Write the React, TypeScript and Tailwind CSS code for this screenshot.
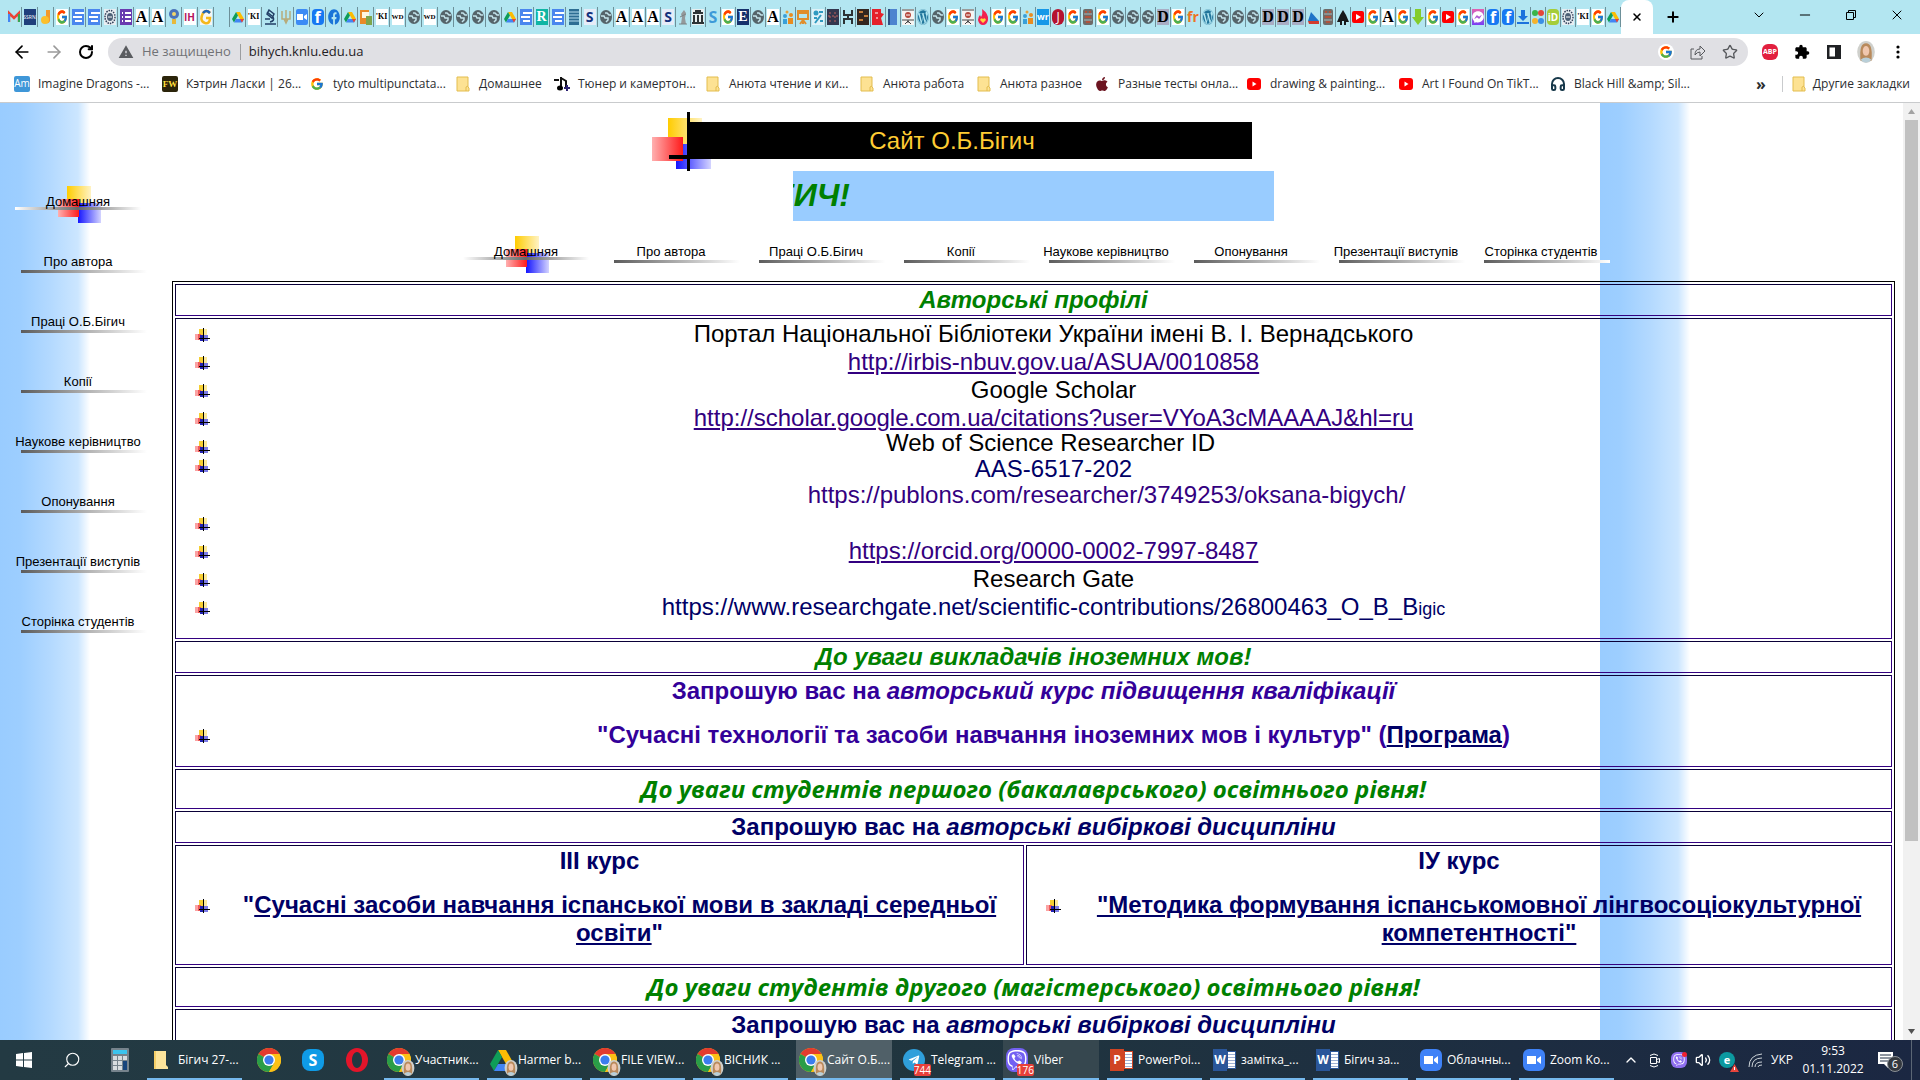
import { clsx } from "clsx";
import {
  ArrowLeft,
  ArrowRight,
  ChevronDown,
  ChevronUp,
  Headphones,
  Minus,
  Plus,
  RotateCw,
  Search,
  Star,
  Volume2,
  X,
} from "lucide-react";
import type { ReactNode } from "react";
import { FaApple, FaFacebook, FaFacebookMessenger, FaTelegramPlane, FaViber, FaWordpress } from "react-icons/fa";
import { FcGoogle } from "react-icons/fc";
import { MdExtension, MdWarning } from "react-icons/md";

/* ---------- small drawings ---------- */

const DriveIcon = ({ className }: { className?: string }) => (
  <svg viewBox="0 0 24 22" className={className}>
    <path d="M8 1h8l8 14h-8z" fill="#fbbc04" />
    <path d="M8 1l4 7L4 22 0 15z" fill="#0f9d58" />
    <path d="M4 22l4-7h16l-4 7z" fill="#4285f4" />
    <path d="M16 15h8l-4 7z" fill="#ea4335" />
  </svg>
);

const ChromeIcon = ({ className }: { className?: string }) => (
  <svg viewBox="0 0 24 24" className={className}>
    <circle cx="12" cy="12" r="12" fill="#fbc116" />
    <path d="M12 12L1.6 6A12 12 0 0 1 22.4 6z" fill="#e33b2e" />
    <path d="M1.6 6A12 12 0 0 0 12 24l5.2-9L12 12z" fill="#2a9d48" />
    <path d="M12 6h10.4A12 12 0 0 1 12 24l5.2-9z" fill="#fbc116" />
    <circle cx="12" cy="12" r="6" fill="#fff" />
    <circle cx="12" cy="12" r="4.6" fill="#3b7ded" />
  </svg>
);

const FolderIcon = ({ className }: { className?: string }) => (
  <svg viewBox="0 0 14 16" className={className}>
    <path d="M1 1h11v10l1 1v3H1z" fill="#fde293" stroke="#e3bd4f" />
    <path d="M10 15v-4l2-1" fill="none" stroke="#e3bd4f" />
  </svg>
);

const YoutubeIcon = () => (
  <svg viewBox="0 0 16 16" className="h-4 w-4 shrink-0">
    <rect x="1" y="2" width="14" height="12" rx="3" fill="#f00" />
    <path d="M6.500 5.500v5l4-2.500z" fill="#fff" />
  </svg>
);

const Face = ({ className }: { className?: string }) => (
  <svg viewBox="0 0 16 20" className={className}>
    <ellipse cx="8" cy="10" rx="8" ry="10" fill="#cfd0cc" />
    <path d="M3 18C2 6 4 2 8 2s6 4 5 16z" fill="#b98a5c" />
    <ellipse cx="8" cy="9" rx="3" ry="4.500" fill="#f0c7ae" />
    <path d="M3 17q5-4 10 0-5 5-10 0z" fill="#b9cfd8" />
  </svg>
);

const Bullet = ({ className }: { className?: string }) => (
  <svg viewBox="0 0 15 14" className={clsx("ml-[18px] h-[14px] w-[15px]", className)}>
    <rect x="4" y="1" width="4" height="6" fill="#f6cf33" />
    <rect x="8" y="1" width="4" height="6" fill="#fdeb9c" />
    <rect x="0" y="6" width="3" height="6" fill="#fba3a3" />
    <rect x="3" y="6" width="3" height="6" fill="#ee5a5a" />
    <rect x="5" y="7" width="4" height="6" fill="#2222b4" />
    <rect x="9" y="7" width="4" height="6" fill="#7c7ce8" />
    <rect x="8" y="0" width="1" height="14" fill="#000" />
    <rect x="4" y="10" width="11" height="1" fill="#000" />
  </svg>
);

const Letter = ({ text, className }: { text: string; className: string }) => (
  <span className={clsx("flex h-4 w-3 items-center justify-center leading-4", className)}>{text}</span>
);

/* ---------- tab strip ---------- */

const serif = "font-['Liberation_Serif',serif] font-bold";

const emblem = (
  <svg viewBox="0 0 12 16" className="h-4 w-3">
    <rect width="12" height="16" fill="#e8eef2" />
    <ellipse cx="6" cy="8" rx="5" ry="6.500" fill="none" stroke="#34425c" strokeDasharray="1.500 1" strokeWidth="1.500" />
    <ellipse cx="6" cy="8" rx="3" ry="4" fill="#4d6077" />
    <path d="M4 8h4" stroke="#fff" />
  </svg>
);

const totem = (
  <svg viewBox="0 0 12 16" className="h-4 w-3">
    <rect x="1" width="10" height="16" rx="2" fill="#6f6a68" />
    <path d="M2 5h8M2 11h8" stroke="#a9b6b8" />
    <path d="M3 3h2M7 3h2M3 8h6M4 13h4" stroke="#b1523c" strokeWidth="2" />
  </svg>
);

const people = (
  <svg viewBox="0 0 12 16" className="h-4 w-3">
    <circle cx="5" cy="3" r="1.500" fill="#e9a13b" />
    <circle cx="3" cy="7" r="2" fill="#3aa0d8" />
    <circle cx="9" cy="6" r="2" fill="#e98c1f" />
    <path d="M1 15v-5h4v5z" fill="#3aa0d8" />
    <path d="M6 15V9h5v6z" fill="#e98c1f" />
  </svg>
);

const board = (
  <svg viewBox="0 0 12 16" className="h-4 w-3">
    <rect width="12" height="16" fill="#f6f4f2" />
    <path d="M0 1h12M0 11h12M6 11v3M3 15l3-3 3 3" stroke="#444" fill="none" />
    <circle cx="6" cy="6" r="3" fill="#b5493d" />
    <path d="M4 6h4" stroke="#fff" />
  </svg>
);

const favicons: Record<string, ReactNode> = {
  gmail: (
    <svg viewBox="0 0 12 16" className="h-4 w-3">
      <path d="M1 13V4l5 5 5-5v9" fill="none" stroke="#ea4335" strokeWidth="2.500" />
      <path d="M1 13V5" stroke="#4285f4" strokeWidth="2" />
      <path d="M11 13V5" stroke="#34a853" strokeWidth="2" />
    </svg>
  ),
  ssrn: <Letter text="SSRN" className="bg-[#1f3f7c] text-[5px] text-white" />,
  orange: (
    <svg viewBox="0 0 12 16" className="h-4 w-3">
      <path d="M6 1h4v11a3 3 0 0 1-4 2z" fill="#f29a2e" />
      <circle cx="5" cy="11" r="4" fill="#fbc02d" />
    </svg>
  ),
  g: (
    <span className="flex h-4 w-3 items-center justify-center bg-white">
      <FcGoogle className="h-4 w-3" preserveAspectRatio="none" />
    </span>
  ),
  docs: (
    <svg viewBox="0 0 12 16" className="h-4 w-3">
      <rect width="12" height="16" fill="#4a86ee" />
      <path d="M3 4h9M1 8h9M3 12h7" stroke="#fff" strokeWidth="2" />
    </svg>
  ),
  stripes: (
    <svg viewBox="0 0 12 16" className="h-4 w-3">
      <rect x="1" width="10" height="16" fill="#2d6e93" />
      <path d="M1 3h10M1 6h10M1 9h10M1 12h10" stroke="#b8dff0" />
    </svg>
  ),
  emblem,
  forms: (
    <svg viewBox="0 0 12 16" className="h-4 w-3">
      <rect width="12" height="16" fill="#6a3ab0" />
      <path d="M2 4h1M5 4h6M2 8h1M5 8h6M2 12h1M5 12h6" stroke="#fff" strokeWidth="2" />
    </svg>
  ),
  a: <Letter text="A" className={clsx(serif, "bg-white text-base text-black")} />,
  bulb: (
    <svg viewBox="0 0 12 16" className="h-4 w-3">
      <circle cx="6" cy="5" r="5" fill="#4c74b8" />
      <circle cx="6" cy="5" r="2" fill="#f3d66b" />
      <path d="M4 10h4v5H4z" fill="#e7b93c" />
    </svg>
  ),
  ih: <Letter text="ІН" className="bg-white text-[10px] font-bold text-[#b4175f]" />,
  gy: (
    <svg viewBox="0 0 12 16" className="h-4 w-3">
      <rect width="12" height="16" fill="#f4f6f8" />
      <path d="M10 4Q6 0 3 4-1 12 5 14q5 1 5-5H6" fill="none" stroke="#f4b81c" strokeWidth="2.500" />
      <path d="M10 4Q6 0 3 4" fill="none" stroke="#1e63ba" strokeWidth="2.500" />
    </svg>
  ),
  blank: null,
  drive: <DriveIcon className="h-[14px] w-3" />,
  ki: <Letter text="'KI" className={clsx(serif, "bg-white text-[8px] text-black")} />,
  scope: (
    <svg viewBox="0 0 12 16" className="h-4 w-3" fill="none" stroke="#233f66" strokeWidth="1.500">
      <path d="M3 3l5 4M5 1l5 4-2 4-5-4zM9 8q2 4-3 5M1 10h5M1 15h11" />
    </svg>
  ),
  trident: (
    <svg viewBox="0 0 12 16" className="h-4 w-3" fill="none" stroke="#b7ac7c" strokeWidth="1.500">
      <path d="M2 2v8h8V2M6 1v13M4 10l2 4 2-4" />
    </svg>
  ),
  zoom: (
    <svg viewBox="0 0 12 16" className="h-4 w-3">
      <rect width="12" height="16" rx="2" fill="#3c8bf5" />
      <path d="M1 5h6v6H1zM8 7l3-2v6L8 9z" fill="#fff" />
    </svg>
  ),
  fb: <Letter text="f" className="rounded-sm bg-[#1778f2] text-base font-bold text-white" />,
  fbr: <FaFacebook className="h-4 w-3 text-[#1a74d8]" preserveAspectRatio="none" />,
  clip: (
    <svg viewBox="0 0 12 16" className="h-4 w-3">
      <rect y="1" width="9" height="14" fill="#e98a28" />
      <rect x="2" y="3" width="7" height="6" fill="#fff6e0" />
      <rect x="6" y="7" width="6" height="9" fill="#7ea64c" />
    </svg>
  ),
  wd: <Letter text="WD" className={clsx(serif, "bg-white text-[7px] text-black")} />,
  globe: (
    <svg viewBox="0 0 12 16" className="h-4 w-3">
      <ellipse cx="6" cy="8" rx="6" ry="7" fill="#55646a" />
      <path d="M1 7h3l1 2h3v2l-2 2M5 4h2l2 2h2" fill="none" stroke="#c4e4ec" strokeWidth="1.500" />
    </svg>
  ),
  r: <Letter text="R" className={clsx(serif, "bg-[#10b5a4] text-sm text-white")} />,
  s: <Letter text="S" className="bg-[#e6ecf8] text-sm font-bold text-[#12307c]" />,
  statue: (
    <svg viewBox="0 0 12 16" className="h-4 w-3">
      <path d="M4 15l1-7-1-3 3-4 2 3-1 5 1 6z" fill="#94999b" />
      <path d="M2 15h8M3 8l6-3" stroke="#7b8284" />
    </svg>
  ),
  museum: (
    <svg viewBox="0 0 12 16" className="h-4 w-3">
      <rect width="12" height="16" fill="#e9efef" />
      <path d="M1 4h10M2 6v7M6 6v7M10 6v7M0 14h12M3 2h6" stroke="#2d3335" strokeWidth="2" />
    </svg>
  ),
  sb: <Letter text="S" className="text-base font-bold text-[#3d9ad8]" />,
  e: <Letter text="E" className={clsx(serif, "bg-[#16306b] text-sm text-white")} />,
  easel: (
    <svg viewBox="0 0 12 16" className="h-4 w-3" fill="none" stroke="#e08d2c" strokeWidth="2">
      <path d="M0 2h12M1 4h10v6H1zM6 10v5M3 15l3-4 3 4" />
    </svg>
  ),
  teal: (
    <svg viewBox="0 0 12 16" className="h-4 w-3">
      <rect width="12" height="16" fill="#dff2f8" />
      <circle cx="4" cy="4" r="2.500" fill="#2f9ac0" />
      <path d="M3 14l6-8M7 3h4M2 9h3M8 12h3" stroke="#2f9ac0" strokeWidth="2" />
    </svg>
  ),
  night: (
    <svg viewBox="0 0 12 16" className="h-4 w-3">
      <rect width="12" height="16" fill="#33364e" />
      <path d="M1 7h10M3 3v10M8 3v10" stroke="#c0635e" strokeDasharray="2 2" />
    </svg>
  ),
  knot: (
    <svg viewBox="0 0 12 16" className="h-4 w-3" fill="none" stroke="#2b3134" strokeWidth="2">
      <path d="M2 1v5h8V1M2 15v-5h8v5M6 6v4" />
    </svg>
  ),
  brown: (
    <svg viewBox="0 0 12 16" className="h-4 w-3">
      <rect width="12" height="16" fill="#33251f" />
      <path d="M2 3h4M7 7h4M2 11h4" stroke="#c47b3a" strokeWidth="2" />
    </svg>
  ),
  red: (
    <svg viewBox="0 0 12 16" className="h-4 w-3">
      <path d="M0 0h9v4l3 1-3 4 2 7H0z" fill="#e5202a" />
      <path d="M3 4h3M4 9h2" stroke="#fff" />
    </svg>
  ),
  book: (
    <svg viewBox="0 0 12 16" className="h-4 w-3">
      <rect x="2" width="8" height="16" fill="#4d83cf" />
      <path d="M2 0v16" stroke="#2d4f84" strokeWidth="2" />
    </svg>
  ),
  board,
  wp: <FaWordpress className="h-4 w-3 text-[#21759b]" preserveAspectRatio="none" />,
  flame: (
    <svg viewBox="0 0 12 16" className="h-4 w-3">
      <path d="M5 0q7 5 6 11-1 5-5 5T1 11q0-3 2-5l1 2q2-3 1-8z" fill="#f2204f" />
      <path d="M6 14l-3-3q1-3 3-1 2-2 3 1z" fill="#ffd43b" />
    </svg>
  ),
  people,
  wr: <Letter text="wr" className="bg-[#1598e8] text-[9px] font-bold text-white" />,
  j: <Letter text="J" className="rounded-md bg-[#b5122f] text-xs text-white" />,
  totem,
  d: <Letter text="D" className={clsx(serif, "bg-[#a9adc4] text-base text-black")} />,
  fr: <Letter text="fr" className="text-sm font-bold text-[#ec7424]" />,
  tri: (
    <svg viewBox="0 0 12 16" className="h-4 w-3">
      <path d="M1 12l3-9 8 9z" fill="#1f74c8" />
      <path d="M1 12h11v3H2z" fill="#d23b2e" />
    </svg>
  ),
  tree: (
    <svg viewBox="0 0 12 16" className="h-4 w-3">
      <path d="M6 1l3 5 3 7H9v3H7v-4H5v4H3v-3H0l3-7z" fill="#16191b" />
    </svg>
  ),
  yt: (
    <svg viewBox="0 0 12 16" className="h-4 w-3">
      <rect y="2" width="12" height="12" rx="2" fill="#f00" />
      <path d="M4 5v6l5-3z" fill="#fff" />
    </svg>
  ),
  green: (
    <svg viewBox="0 0 12 16" className="h-4 w-3">
      <path d="M3 0h6v8h3l-6 8-6-8h3z" fill="#84cc2a" />
    </svg>
  ),
  msg: (
    <span className="flex h-4 w-3 items-center justify-center bg-linear-to-b from-[#e45fb0] to-[#7a3cf4]">
      <FaFacebookMessenger className="h-3 w-3 text-white" />
    </span>
  ),
  down: (
    <svg viewBox="0 0 12 16" className="h-4 w-3">
      <path d="M4 1h4v6h3l-5 5-5-5h3zM0 13h12v2H0z" fill="#1c72dc" />
    </svg>
  ),
  dots: (
    <svg viewBox="0 0 12 16" className="h-4 w-3">
      <circle cx="3" cy="4" r="3" fill="#3bb54a" />
      <circle cx="9" cy="4" r="3" fill="#e5473a" />
      <circle cx="3" cy="12" r="3" fill="#f5b32c" />
      <circle cx="9" cy="12" r="3" fill="#3b8fe5" />
    </svg>
  ),
  id: <Letter text="iD" className="rounded-sm bg-[#a5cd39] text-[10px] font-bold text-white" />,
};

const wideTabs =
  "gmail ssrn orange g docs docs emblem forms a a bulb ih gy blank drive ki scope trident zoom fb fbr drive clip ki wd globe wd globe globe globe globe drive docs r docs stripes s globe a a".split(" ");
const narrowTabs =
  "a s statue museum sb g e globe a people easel teal night knot brown red book board wp globe g board flame g g people wr j g totem g globe globe globe d g fr wp globe globe globe d d d tri totem tree yt g a g green g yt g msg fb fb down dots id emblem ki g drive".split(" ");

function TabStrip() {
  return (
    <div className="flex h-[34px] shrink-0 items-stretch bg-[#b3e6f1] pl-[6px]">
      {wideTabs.map((name, i) => (
        <button key={i} aria-label={name} className="flex w-4 shrink-0 items-center justify-center">
          <span className="flex h-5 w-4 items-center justify-center border-r border-[#6d9099]">{favicons[name]}</span>
        </button>
      ))}
      {narrowTabs.map((name, i) => (
        <button key={i} aria-label={name} className="flex w-[15px] shrink-0 items-center justify-center">
          <span className="flex h-5 w-[15px] items-center justify-center border-r border-[#6d9099]">{favicons[name]}</span>
        </button>
      ))}
      <button aria-label="Закрыть вкладку" className="flex w-8 shrink-0 items-center justify-center rounded-t-lg bg-white">
        <X className="h-3 w-3" strokeWidth={3} />
      </button>
      <button aria-label="Новая вкладка" className="ml-[10px] flex w-5 items-center justify-center">
        <Plus className="h-4 w-4" strokeWidth={3} />
      </button>
      <div className="ml-auto flex items-center pb-1">
        <button aria-label="Поиск вкладок" className="flex w-[46px] justify-center">
          <ChevronDown className="h-4 w-4" strokeWidth={1.5} />
        </button>
        <button aria-label="Свернуть" className="flex w-[46px] justify-center">
          <Minus className="h-4 w-4" strokeWidth={1.5} />
        </button>
        <button aria-label="Окно" className="flex w-[46px] justify-center">
          <svg viewBox="0 0 12 12" className="h-3 w-3" fill="none" stroke="#000">
            <path d="M1.500 3.500h7v7h-7zM3.500 3.500v-2h7v7h-2" />
          </svg>
        </button>
        <button aria-label="Закрыть" className="flex w-[46px] justify-center">
          <X className="h-4 w-4" strokeWidth={1.5} />
        </button>
      </div>
    </div>
  );
}

/* ---------- toolbar and bookmarks ---------- */

function Toolbar() {
  return (
    <div className="flex h-9 shrink-0 items-center pr-[14px] pl-3">
      <button aria-label="Назад" className="mr-3 w-5">
        <ArrowLeft className="h-5 w-5" strokeWidth={2} />
      </button>
      <button aria-label="Вперёд" className="mr-3 w-5 text-[#9a9a9a]">
        <ArrowRight className="h-5 w-5" strokeWidth={2} />
      </button>
      <button aria-label="Обновить" className="mr-3 flex w-5 justify-center">
        <RotateCw className="h-4 w-4" strokeWidth={3} />
      </button>
      <div className="flex h-7 flex-1 items-center rounded-full bg-[#e0e0e4] pr-[10px] pl-[10px] text-[13px]">
        <MdWarning className="h-4 w-4 text-[#5a5c60]" />
        <label htmlFor="address" className="ml-2 text-[#707276]">
          Не защищено
        </label>
        <span className="mr-2 ml-[9px] h-4 w-px bg-[#9b9da0]" />
        <input id="address" defaultValue="bihych.knlu.edu.ua" className="min-w-0 flex-1 bg-transparent text-[#1f2124] outline-none" />
        <span className="flex h-4 w-4 items-center justify-center rounded-full bg-white">
          <FcGoogle className="h-[14px] w-[14px]" />
        </span>
        <button aria-label="Поделиться" className="ml-4">
          <svg viewBox="0 0 16 16" className="h-4 w-4" fill="none" stroke="#56585c">
            <path d="M4 5H1v10h11v-3M5 11q0-6 5-6V2l5 5-5 5V8q-3 0-5 3z" />
          </svg>
        </button>
        <button aria-label="В закладки" className="ml-4">
          <Star className="h-4 w-4 text-[#56585c]" />
        </button>
      </div>
      <button className="ml-[14px] flex h-4 w-4 items-center justify-center rounded-md bg-[#e2203f] text-[7px] font-bold text-white">
        ABP
      </button>
      <button aria-label="Расширения" className="ml-4">
        <MdExtension className="h-4 w-4" />
      </button>
      <button aria-label="Боковая панель" className="ml-4">
        <svg viewBox="0 0 16 16" className="h-4 w-4">
          <path d="M1 1h14v14H1zM3.500 3.500v9H9v-9z" fill="#1f2124" fillRule="evenodd" />
        </svg>
      </button>
      <button aria-label="Профиль" className="ml-[14px]">
        <Face className="h-[22px] w-5" />
      </button>
      <button aria-label="Меню" className="ml-[14px] w-4">
        <svg viewBox="0 0 16 16" className="h-4 w-4">
          <circle cx="8" cy="3" r="1.600" />
          <circle cx="8" cy="8" r="1.600" />
          <circle cx="8" cy="13" r="1.600" />
        </svg>
      </button>
    </div>
  );
}

const folder = <FolderIcon className="h-4 w-4 shrink-0" />;

const bookmarks: { label: string; width: string; icon: ReactNode }[] = [
  {
    label: "Imagine Dragons -...",
    width: "w-[108px]",
    icon: <span className="flex h-4 w-4 items-center justify-center rounded-xs bg-[#3f97d8] text-[10px] text-white">Am</span>,
  },
  {
    label: "Кэтрин Ласки | 26...",
    width: "w-[107px]",
    icon: (
      <span className="flex h-4 w-4 items-center justify-center rounded-xs bg-[#2b240a] font-['Liberation_Serif',serif] text-[9px] font-bold text-[#ffdf3a]">
        FW
      </span>
    ),
  },
  { label: "tyto multipunctata...", width: "w-[106px]", icon: <FcGoogle className="h-[14px] w-4" /> },
  { label: "Домашнее", width: "w-[59px]", icon: folder },
  {
    label: "Тюнер и камертон...",
    width: "w-[111px]",
    icon: (
      <svg viewBox="0 0 16 16" className="h-4 w-4">
        <path d="M7 1v10M7 2l5 3v6M0 4h5" stroke="#111" strokeWidth="2" fill="none" />
        <ellipse cx="6" cy="12" rx="3" ry="2.500" />
        <path d="M13 9v6M10 12h6" stroke="#2c2272" strokeWidth="2" />
      </svg>
    ),
  },
  { label: "Анюта чтение и ки...", width: "w-[114px]", icon: folder },
  { label: "Анюта работа", width: "w-[77px]", icon: folder },
  { label: "Анюта разное", width: "w-[78px]", icon: folder },
  { label: "Разные тесты онла...", width: "w-28", icon: <FaApple className="h-4 w-4 text-[#6c1420]" /> },
  { label: "drawing & painting...", width: "w-28", icon: <YoutubeIcon /> },
  { label: "Art I Found On TikT...", width: "w-28", icon: <YoutubeIcon /> },
  { label: "Black Hill &amp; Sil...", width: "w-28", icon: <Headphones className="h-4 w-4 text-[#17384a]" strokeWidth={3} /> },
];

function BookmarksBar() {
  return (
    <nav className="flex h-[33px] shrink-0 items-center gap-4 border-b border-[#c9cbcd] pr-[10px] pb-1 pl-[14px] text-xs text-[#2b2d30]">
      {bookmarks.map((b) => (
        <a key={b.label} href="#" className="flex shrink-0 items-center gap-2 whitespace-nowrap">
          {b.icon}
          <span className={b.width}>{b.label.replace("&amp;", "&amp;")}</span>
        </a>
      ))}
      <button aria-label="Ещё закладки" className="ml-auto text-base leading-4 font-bold">»</button>
      <a href="#" className="flex items-center gap-[6px] border-l border-[#c9cbcd] pl-2 whitespace-nowrap">
        {folder}
        Другие закладки
      </a>
    </nav>
  );
}

/* ---------- site ---------- */

const sections = [
  "Домашняя",
  "Про автора",
  "Праці О.Б.Бігич",
  "Копії",
  "Наукове керівництво",
  "Опонування",
  "Презентації виступів",
  "Сторінка студентів",
];

function NavButton({ label, home }: { label: string; home: boolean }) {
  return (
    <a href="#" className="grid h-[60px] w-[140px] shrink-0 text-[13px] leading-[62px] text-black">
      <svg viewBox="0 0 140 60" className="h-[60px] w-[140px] [grid-area:1/1]">
        {home ? (
          <>
            <rect x="59" y="15" width="24" height="20" fill="url(#yellow)" />
            <rect x="70" y="32" width="23" height="20" fill="url(#blue)" />
            <rect x="50" y="28" width="21" height="18" fill="url(#red)" />
            <rect x="7" y="36" width="126" height="3" fill="url(#shaft)" />
          </>
        ) : (
          <rect x="13" y="39" width="126" height="3" fill="url(#rule)" />
        )}
      </svg>
      <span className="text-center whitespace-nowrap [grid-area:1/1]">{label}</span>
    </a>
  );
}

const Gradients = () => (
  <svg className="h-0 w-0 shrink-0">
    <defs>
      <linearGradient id="yellow"><stop stopColor="#fc0" /><stop offset="1" stopColor="#fff3c4" /></linearGradient>
      <linearGradient id="blue"><stop stopColor="#1414ff" /><stop offset="1" stopColor="#d4d4ff" /></linearGradient>
      <linearGradient id="red"><stop stopColor="#ffb0b0" /><stop offset="1" stopColor="#ff1a1a" /></linearGradient>
      <linearGradient id="shaft"><stop stopColor="#fff" /><stop offset=".5" stopColor="#666" /><stop offset="1" stopColor="#fff" /></linearGradient>
      <linearGradient id="rule"><stop stopColor="#5c5c5c" /><stop offset="1" stopColor="#fff" /></linearGradient>
    </defs>
  </svg>
);

const cell = "border border-t-[#0a0038] border-r-[#330080] border-b-[#330080] border-l-[#0a0038] p-px";

function Item({ children, className, mark = "mt-2" }: { children?: ReactNode; className?: string; mark?: string }) {
  return (
    <li className={clsx("grid grid-cols-[40px_1fr]", className ?? "min-h-7")}>
      <Bullet className={mark} />
      <div>{children}</div>
    </li>
  );
}

function Profiles() {
  return (
    <ul className="pb-4">
      <Item>Портал Національної Бібліотеки України імені В. І. Вернадського</Item>
      <Item>
        <a href="#" className="text-[#330080] underline">http://irbis-nbuv.gov.ua/ASUA/0010858</a>
      </Item>
      <Item>Google Scholar</Item>
      <Item>
        <a href="#" className="text-[#330080] underline">http://scholar.google.com.ua/citations?user=VYoA3cMAAAAJ&amp;hl=ru</a>
      </Item>
      <Item className="h-6 pr-[6px] leading-[22px]">Web of Science Researcher ID</Item>
      <Item className="pb-px leading-[26px] text-[#000066]" mark="mt-[3px]">
        AAS-6517-202
        <p className="pl-[106px] text-[#330080]">https://publons.com/researcher/3749253/oksana-bigych/</p>
      </Item>
      <Item />
      <Item>
        <a href="#" className="text-[#330080] underline">https://orcid.org/0000-0002-7997-8487</a>
      </Item>
      <Item>Research Gate</Item>
      <Item className="h-7 text-[#000066]">
        https://www.researchgate.net/scientific-contributions/26800463_O_B_B<span className="text-lg leading-none">igic</span>
      </Item>
    </ul>
  );
}

function Course({ title, children }: { title: ReactNode; children: ReactNode }) {
  return (
    <>
      <p>{title}</p>
      <ul className="py-4">
        <Item>{children}</Item>
      </ul>
    </>
  );
}

const Invitation = () => (
  <>
    Запрошую вас на <i>авторські вибіркові дисципліни</i>
  </>
);

function SiteTable() {
  const green = "text-[#008000] italic";
  const level = "h-10 font-['Open_Sans','Noto_Sans',sans-serif]";
  return (
    <table className="w-full border-separate border-spacing-[2px] border border-black text-center text-2xl leading-7 font-bold text-[#000066]">
      <tbody>
        <tr>
          <td colSpan={2} className={clsx(cell, green)}>Авторські профілі</td>
        </tr>
        <tr>
          <td colSpan={2} className={clsx(cell, "font-normal text-black")}>
            <Profiles />
          </td>
        </tr>
        <tr>
          <td colSpan={2} className={clsx(cell, green)}>До уваги викладачів іноземних мов!</td>
        </tr>
        <tr>
          <td colSpan={2} className={clsx(cell, "text-[#330099]")}>
            <Course title={<>Запрошую вас на <i>авторський курс підвищення кваліфікації</i></>}>
              "Сучасні технології та засоби навчання іноземних мов і культур" (
              <a href="#" className="text-[#000066] underline">Програма</a>)
            </Course>
          </td>
        </tr>
        <tr>
          <td colSpan={2} className={clsx(cell, green, level)}>До уваги студентів першого (бакалаврського) освітнього рівня!</td>
        </tr>
        <tr>
          <td colSpan={2} className={cell}><Invitation /></td>
        </tr>
        <tr className="align-top">
          <td className={clsx(cell, "w-[849px]")}>
            <Course title="III курс">
              "<a href="#" className="underline">Сучасні засоби навчання іспанської мови в закладі середньої освіти</a>"
            </Course>
          </td>
          <td className={cell}>
            <Course title="ІУ курс">
              <a href="#" className="underline">"Методика формування іспанськомовної лінгвосоціокультурної компетентності"</a>
            </Course>
          </td>
        </tr>
        <tr>
          <td colSpan={2} className={clsx(cell, green, level)}>До уваги студентів другого (магістерського) освітнього рівня!</td>
        </tr>
        <tr>
          <td colSpan={2} className={clsx(cell, "h-20 align-top")}><Invitation /></td>
        </tr>
      </tbody>
    </table>
  );
}

function Banner() {
  return (
    <header className="flex h-[59px] justify-center pr-[163px]">
      <svg viewBox="0 0 60 59" className="h-[59px] w-[60px] shrink-0">
        <rect x="16" y="6" width="34" height="27" fill="url(#yellow)" />
        <rect x="24" y="32" width="35" height="25" fill="url(#blue)" />
        <rect x="0" y="25" width="31" height="24" fill="url(#red)" />
        <rect x="35" width="3" height="59" />
        <rect x="17" y="43" width="21" height="4" />
      </svg>
      <h1 className="mt-[10px] -ml-6 h-[37px] w-[564px] bg-black pr-9 text-center text-2xl leading-[37px] text-[#ffcc33]">
        Сайт О.Б.Бігич
      </h1>
    </header>
  );
}

function Site() {
  return (
    <main className="flex min-w-0 flex-1 overflow-hidden bg-[linear-gradient(to_right,#99ccff,#9dceff_20px,#b3d9ff_50px,#cce6ff_78px,#fff_90px,#fff)] bg-[length:1600px_100%] bg-repeat-x pr-2 pl-2 font-['Liberation_Sans',Arial,sans-serif]">
      <Gradients />
      <nav className="w-[164px] shrink-0 pt-[68px]">
        {sections.map((label, i) => (
          <NavButton key={label} label={label} home={i === 0} />
        ))}
      </nav>
      <div className="min-w-0 flex-1 pt-[9px]">
        <Banner />
        <div className="mx-auto h-[50px] w-[481px] bg-[#99ccff]">
          <p className="flex w-[57px] justify-end overflow-hidden text-[32px] leading-[48px] font-bold whitespace-nowrap text-[#008000] italic">
            БІГИЧ!
          </p>
        </div>
        <nav className="flex justify-center gap-[5px]">
          {sections.map((label, i) => (
            <NavButton key={label} label={label} home={i === 0} />
          ))}
        </nav>
        <SiteTable />
      </div>
    </main>
  );
}

function Scrollbar() {
  return (
    <div className="flex w-[17px] shrink-0 flex-col items-center bg-[#f1f1f1]">
      <svg viewBox="0 0 17 17" className="h-[17px] w-[17px]"><path d="M5 11l3.500-5 3.500 5z" fill="#a3a3a3" /></svg>
      <div className="h-[77%] w-[13px] bg-[#c1c1c1]" />
      <svg viewBox="0 0 17 17" className="mt-auto h-[17px] w-[17px]"><path d="M5 6l3.500 5L12 6z" fill="#505050" /></svg>
    </div>
  );
}

/* ---------- taskbar ---------- */

const WithFace = ({ children }: { children: ReactNode }) => (
  <span className="relative flex h-6 w-6 shrink-0 items-center">
    {children}
    <Face className="absolute -right-1 -bottom-1 h-4 w-[14px]" />
  </span>
);

const WithBadge = ({ children, count }: { children: ReactNode; count: string }) => (
  <span className="relative flex h-6 w-6 shrink-0 items-center">
    {children}
    <span className="absolute -right-1 -bottom-1 rounded-xs bg-[#e8403a] text-[10px] leading-3 text-white">{count}</span>
  </span>
);

const OfficeIcon = ({ letter, className }: { letter: string; className: string }) => (
  <span className="flex h-[22px] w-6 shrink-0 items-center">
    <span className={clsx("flex h-[22px] w-[14px] items-center justify-center text-xs font-bold text-white", className)}>{letter}</span>
    <span className={clsx("flex h-[18px] w-[9px] p-px", className)}>
      <span className="h-full w-full bg-[repeating-linear-gradient(#fff_0_2px,#9fb2d4_2px_3px)]" />
    </span>
  </span>
);

const ZoomIcon = () => (
  <svg viewBox="0 0 24 22" className="h-[22px] w-6 shrink-0">
    <rect x="1" width="22" height="22" rx="6" fill="#3f82f7" />
    <path d="M5 7h9v8H5zM15 10l4-3v8l-4-3z" fill="#fff" />
  </svg>
);

const chromeFace = <WithFace><ChromeIcon className="h-6 w-6" /></WithFace>;

const tasks: { label: string; icon: ReactNode; bg?: string }[] = [
  { label: "Участник...", icon: chromeFace },
  { label: "Harmer b...", icon: <WithFace><DriveIcon className="h-[22px] w-6" /></WithFace> },
  { label: "FILE VIEW...", icon: chromeFace },
  { label: "ВІСНИК ...", icon: chromeFace },
  { label: "Сайт О.Б....", icon: chromeFace, bg: "bg-[#506068]" },
  {
    label: "Telegram ...",
    icon: (
      <WithBadge count="744">
        <span className="flex h-[22px] w-[22px] items-center justify-center rounded-full bg-[#2f9fdb]">
          <FaTelegramPlane className="h-3 w-3 text-white" />
        </span>
      </WithBadge>
    ),
  },
  {
    label: "Viber",
    bg: "bg-[#36474f]",
    icon: (
      <WithBadge count="176">
        <span className="flex h-6 w-[22px] items-center justify-center rounded-lg bg-[#7360f2]">
          <FaViber className="h-5 w-5 text-white" />
        </span>
      </WithBadge>
    ),
  },
  { label: "PowerPoi...", icon: <OfficeIcon letter="P" className="bg-[#d04423]" /> },
  { label: "замітка_...", icon: <OfficeIcon letter="W" className="bg-[#2a5699]" /> },
  { label: "Бігич за...", icon: <OfficeIcon letter="W" className="bg-[#2a5699]" /> },
  { label: "Облачны...", icon: <ZoomIcon /> },
  { label: "Zoom Ko...", icon: <ZoomIcon /> },
];

function Task({ label, icon, bg }: { label: string; icon: ReactNode; bg?: string }) {
  return (
    <button
      className={clsx(
        "flex shrink-0 items-center gap-1 border-b-2 border-[#76b9ed] pt-[2px] pl-[3px] whitespace-nowrap",
        bg ? "w-24" : "w-[95px]",
        bg,
      )}
    >
      {icon}
      <span>{label}</span>
    </button>
  );
}

function Taskbar() {
  return (
    <footer className="flex h-10 shrink-0 items-stretch bg-linear-to-r from-[#233a43] via-[#20353f] to-[#1b2742] text-xs text-white">
      <button aria-label="Пуск" className="flex w-12 shrink-0 items-center justify-center">
        <svg viewBox="0 0 16 16" className="h-4 w-4" fill="#fff">
          <path d="M0 2l7-1v6.500H0zM8 .9L16 0v7.500H8zM0 8.500h7V15l-7-1zM8 8.500h8V16l-8-1z" />
        </svg>
      </button>
      <button aria-label="Поиск" className="flex w-12 shrink-0 items-center justify-center">
        <Search className="h-[18px] w-[18px] -scale-x-100" strokeWidth={1.5} />
      </button>
      <button aria-label="Калькулятор" className="flex w-12 shrink-0 items-center justify-center">
        <svg viewBox="0 0 18 24" className="h-6 w-[18px]">
          <rect width="18" height="24" rx="1" fill="#76838c" />
          <rect x="2" y="2" width="14" height="4" fill="#3cc4ee" />
          <path d="M2 8h4v4H2zM7 8h4v4H7zM12 8h4v4h-4zM2 13h4v4H2zM7 13h4v4H7zM2 18h4v4H2zM7 18h4v4H7z" fill="#d8dde0" />
          <path d="M12 13h4v9h-4z" fill="#17457c" />
        </svg>
      </button>
      <span className="mr-[10px] ml-[3px] flex">
        <Task
          label="Бігич 27-..."
          icon={
            <svg viewBox="0 0 24 22" className="h-[22px] w-6 shrink-0">
              <path d="M4 2h8v18H4z" fill="#f5cf68" />
              <path d="M6 2h10v14l2 2v2H6z" fill="#fce49b" />
            </svg>
          }
        />
      </span>
      <button aria-label="Chrome" className="flex w-[34px] shrink-0 items-center justify-center"><ChromeIcon className="h-6 w-6" /></button>
      <button aria-label="Skype" className="ml-[10px] flex w-[34px] shrink-0 items-center justify-center">
        <span className="flex h-[22px] w-[22px] items-center justify-center rounded-lg bg-[#0f9be6] text-base font-bold">S</span>
      </button>
      <button aria-label="Opera" className="mr-[10px] ml-[10px] flex w-[34px] shrink-0 items-center justify-center">
        <svg viewBox="0 0 22 24" className="h-6 w-[22px]">
          <path d="M11 0a11 12 0 1 0 0 24 11 12 0 0 0 0-24zm0 4c3 0 5 4 5 8s-2 8-5 8-5-4-5-8 2-8 5-8z" fill="#e3152a" fillRule="evenodd" />
        </svg>
      </button>
      <div className="flex gap-2">
        {tasks.map((task) => (
          <Task key={task.label} {...task} />
        ))}
      </div>
      <div className="ml-auto flex shrink-0 items-center gap-2">
        <ChevronUp className="h-4 w-4" />
        <svg viewBox="0 0 16 16" className="h-4 w-4" fill="none" stroke="#fff">
          <path d="M3.500 5.500h6v6h-6zM9.500 7.500l3-1v4l-3-1M3 3.500q4-3 8 0M3 13.500q4 3 8 0" />
        </svg>
        <span className="relative flex h-4 w-4 items-center justify-center rounded-md bg-[#8f6ff0]">
          <FaViber className="h-3 w-3 text-white" />
          <span className="absolute top-0 right-0 h-[5px] w-[5px] rounded-full bg-[#f02030]" />
        </span>
        <Volume2 className="h-4 w-4" />
        <span className="relative flex h-4 w-4 items-center justify-center rounded-full bg-[#0c99a0] text-[11px] font-bold">
          e
          <svg viewBox="0 0 9 8" className="absolute -right-1 -bottom-1 h-2 w-[9px]">
            <path d="M4.500 0L9 8H0z" fill="#e8453c" />
            <path d="M4.500 3v3" stroke="#fff" />
          </svg>
        </span>
        <svg viewBox="0 0 16 16" className="ml-1 h-4 w-4" fill="none" stroke="#ccd3d8">
          <path d="M2 15Q2 3 15 2M5 15q0-9 10-9M8 15q0-5 7-5M11 15q0-2 4-2" />
        </svg>
        <span>УКР</span>
        <div className="ml-1 flex w-14 flex-col items-center leading-[18px] whitespace-nowrap">
          <span>9:53</span>
          <span>01.11.2022</span>
        </div>
        <button className="relative ml-2 h-6 w-[26px]">
          <svg viewBox="0 0 18 18" className="h-[18px] w-[18px]">
            <path d="M1 1h15v12h-5v4l-4-4H1z" fill="#fff" />
            <path d="M3 4h11M3 7h11M3 10h8" stroke="#1c2a40" />
          </svg>
          <span className="absolute right-0 bottom-0 flex h-4 w-4 items-center justify-center rounded-full border border-[#8b9096] bg-[#33383f] text-[11px]">
            6
          </span>
        </button>
        <span className="mr-2 h-10 w-px bg-[#5b6675]" />
      </div>
    </footer>
  );
}

export default function App() {
  return (
    <div className="flex h-screen flex-col overflow-hidden bg-white font-['Open_Sans','Noto_Sans',sans-serif]">
      <TabStrip />
      <Toolbar />
      <BookmarksBar />
      <div className="flex min-h-0 flex-1">
        <Site />
        <Scrollbar />
      </div>
      <Taskbar />
    </div>
  );
}
